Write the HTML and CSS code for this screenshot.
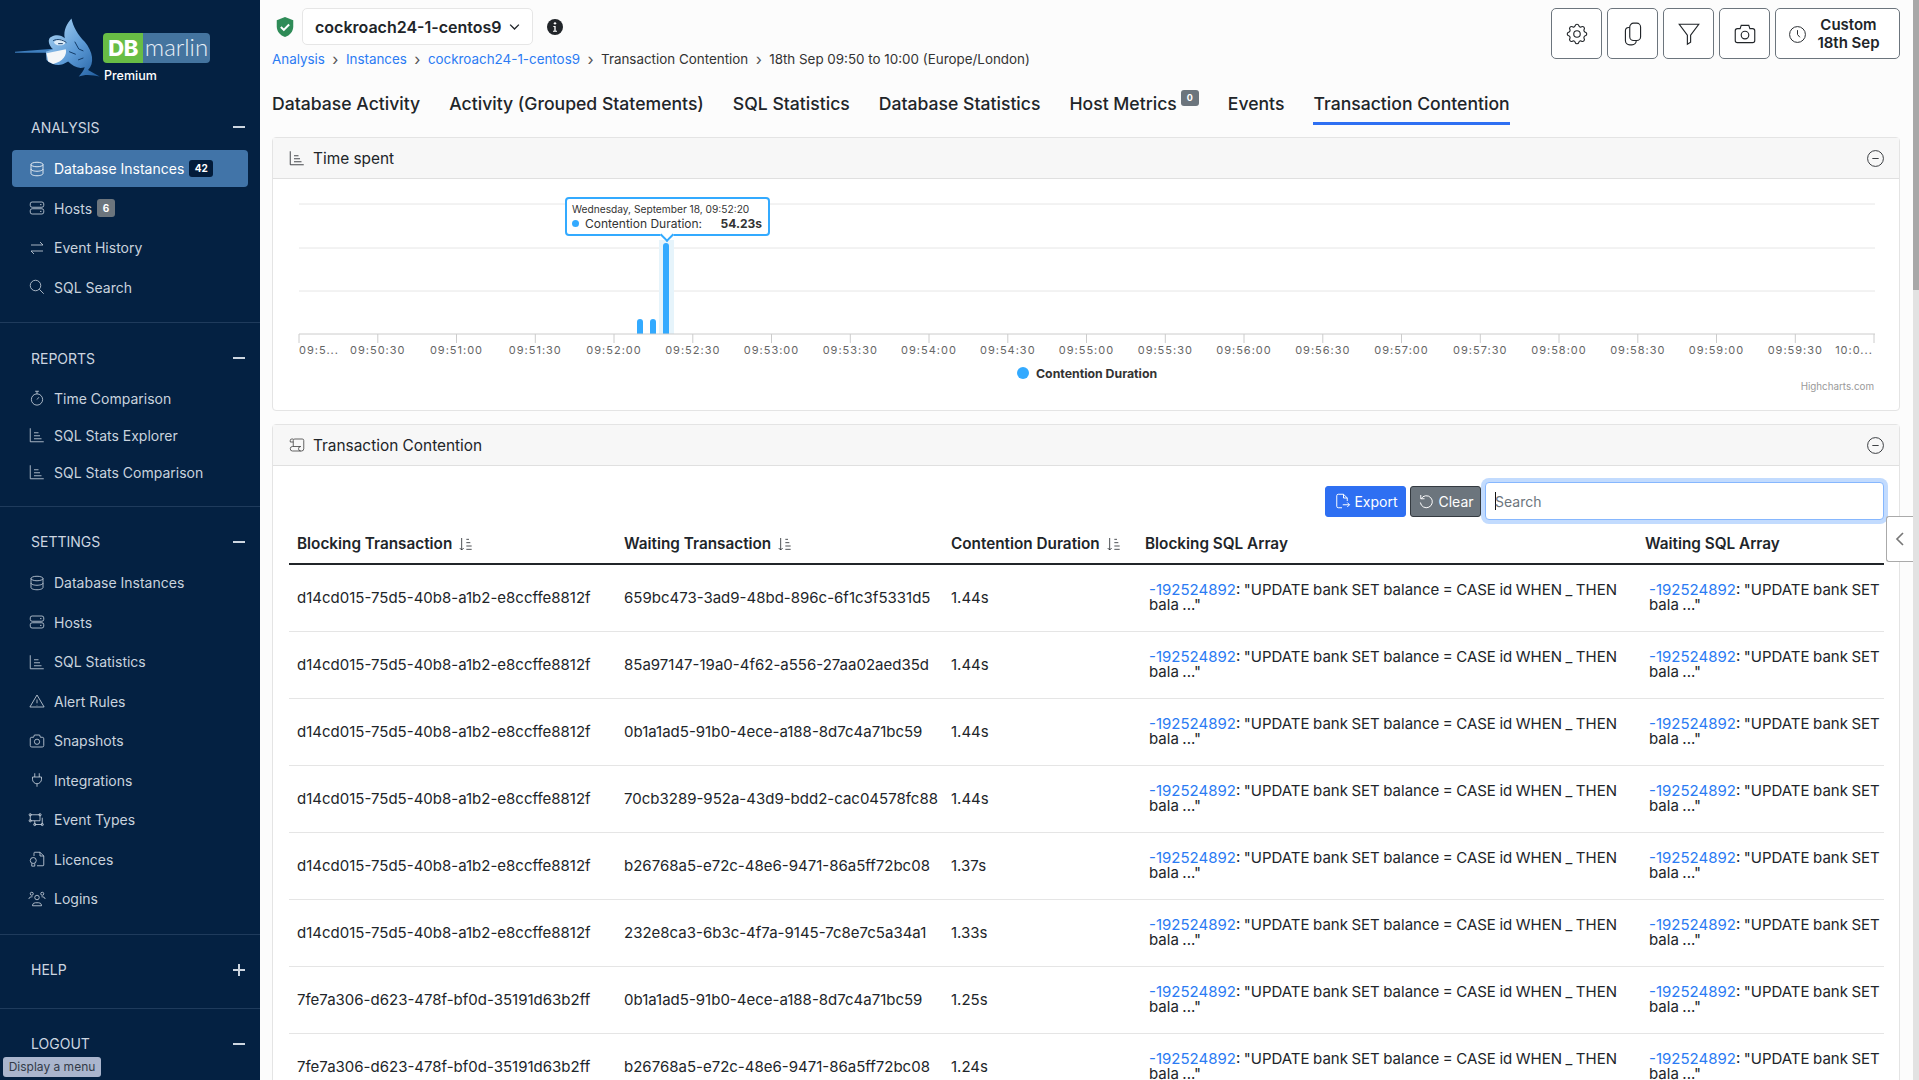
FILE: index.html
```html
<!DOCTYPE html>
<html lang="en">
<head>
  <meta charset="UTF-8">
  <title>Transaction Contention - DBmarlin</title>
  <link rel="stylesheet" href="styles.css">
</head>
<body>
  <svg class="sprite" xmlns="http://www.w3.org/2000/svg">
    <symbol id="i-database" viewBox="0 0 24 24"><ellipse cx="12" cy="6" rx="8" ry="3"/><path d="M4 6v12c0 1.7 3.6 3 8 3s8-1.3 8-3V6"/><path d="M4 12c0 1.7 3.6 3 8 3s8-1.3 8-3"/></symbol>
    <symbol id="i-server" viewBox="0 0 24 24"><rect x="3" y="4" width="18" height="7" rx="2.5"/><rect x="3" y="13" width="18" height="7" rx="2.5"/><path d="M16 7.5h2M16 16.5h2"/></symbol>
    <symbol id="i-arrows" viewBox="0 0 24 24"><path d="M4 8h16l-4-4M20 16H4l4 4"/></symbol>
    <symbol id="i-search" viewBox="0 0 24 24"><circle cx="10" cy="10" r="7"/><path d="M15 15l6 6"/></symbol>
    <symbol id="i-stopwatch" viewBox="0 0 24 24"><circle cx="12" cy="14" r="7.5"/><path d="M9.5 3h5M12 3v3.5M12 14l2.5-3"/></symbol>
    <symbol id="i-chart" viewBox="0 0 24 24"><path d="M3 3v18h18M8 9h6M8 13h8M8 17h10"/></symbol>
    <symbol id="i-alert" viewBox="0 0 24 24"><path d="M12 4L2.5 20h19zM12 10v5M12 17.5v.5"/></symbol>
    <symbol id="i-camera" viewBox="0 0 24 24"><path d="M5 7h2.5l1-3h7l1 3H19a2 2 0 0 1 2 2v9a2 2 0 0 1-2 2H5a2 2 0 0 1-2-2V9a2 2 0 0 1 2-2z"/><circle cx="12" cy="13" r="3.5"/></symbol>
    <symbol id="i-plug" viewBox="0 0 24 24"><path d="M9 3v5M15 3v5M6 8h12v3a6 6 0 0 1-12 0zM12 17v4"/></symbol>
    <symbol id="i-schema" viewBox="0 0 24 24"><path d="M3 5h13v8H3zM19 9v9H9v-5"/><circle cx="3" cy="5" r="1.5"/><circle cx="16" cy="5" r="1.5"/><circle cx="3" cy="13" r="1.5"/><circle cx="19" cy="18" r="1.5"/><circle cx="9" cy="18" r="1.5"/></symbol>
    <symbol id="i-licence" viewBox="0 0 24 24"><path d="M8 8V4a1 1 0 0 1 1-1h7l5 5v12a1 1 0 0 1-1 1H12M16 3v5h5"/><circle cx="7" cy="14" r="4"/><path d="M5 18v3.5h4V18"/></symbol>
    <symbol id="i-users" viewBox="0 0 24 24"><circle cx="12" cy="10" r="3"/><path d="M6 21v-1a4 4 0 0 1 4-3h4a4 4 0 0 1 4 3v1H6z"/><circle cx="5" cy="5" r="2"/><circle cx="19" cy="5" r="2"/><path d="M1 12a4 4 0 0 1 4-3h1M23 12a4 4 0 0 0-4-3h-1"/></symbol>
    <symbol id="i-sort" viewBox="0 0 24 24"><path d="M7 3v18l-3-3M7 21l3-3M14 5h4M14 10h6M14 15h8M14 20h8"/></symbol>
    <symbol id="i-minus-circle" viewBox="0 0 24 24"><circle cx="12" cy="12" r="10"/><path d="M8 12h8"/></symbol>
  </svg>

  <aside class="sidebar">
    <div class="logo">
      <svg class="marlin" viewBox="0 0 280 210" xmlns="http://www.w3.org/2000/svg">
        <defs>
          <linearGradient id="fish" x1="0" y1="0" x2="1" y2="1">
            <stop offset="0" stop-color="#b5dbf7"/>
            <stop offset="0.55" stop-color="#5c9ad6"/>
            <stop offset="1" stop-color="#1f5c9e"/>
          </linearGradient>
        </defs>
        <path d="M15 125L130 116L136 128L15 128Z" fill="#3f7fbf"/>
        <path d="M185 25C190 50 205 75 225 95C250 125 255 160 235 180L270 200C250 195 225 192 207 200C215 190 222 183 225 172C205 178 190 170 175 155L165 160C150 170 125 165 110 150L108 125L130 118C115 105 112 85 125 80C140 72 155 75 165 85C160 60 172 40 185 25Z" fill="url(#fish)"/>
        <path d="M110 130L168 118C172 135 160 155 130 162L115 155Z" fill="#f4f6f8"/>
        <ellipse cx="150" cy="97" rx="17" ry="9" fill="#dcebf8"/>
        <path d="M130 92C142 86 158 88 170 98M145 101h14M195 95l12 22M207 117l14 6M178 125l20 8M205 150l16-6" fill="none" stroke="#123a66" stroke-width="3"/>
      </svg>
      <div class="logo-text">
        <div class="logo-badge"><span class="logo-db">DB</span><span class="logo-name">marlin</span></div>
        <div class="logo-plan">Premium</div>
      </div>
    </div>

    <section class="nav-section">
      <div class="nav-head"><span>ANALYSIS</span><span class="nav-toggle"></span></div>
      <ul class="nav-list">
        <li class="nav-item active"><svg class="icon"><use href="#i-database"/></svg>Database Instances<span class="badge badge-dark">42</span></li>
        <li class="nav-item"><svg class="icon"><use href="#i-server"/></svg>Hosts<span class="badge badge-grey">6</span></li>
        <li class="nav-item"><svg class="icon"><use href="#i-arrows"/></svg>Event History</li>
        <li class="nav-item"><svg class="icon"><use href="#i-search"/></svg>SQL Search</li>
      </ul>
    </section>

    <section class="nav-section">
      <div class="nav-head"><span>REPORTS</span><span class="nav-toggle"></span></div>
      <ul class="nav-list nav-list-short">
        <li class="nav-item"><svg class="icon"><use href="#i-stopwatch"/></svg>Time Comparison</li>
        <li class="nav-item"><svg class="icon"><use href="#i-chart"/></svg>SQL Stats Explorer</li>
        <li class="nav-item"><svg class="icon"><use href="#i-chart"/></svg>SQL Stats Comparison</li>
      </ul>
    </section>

    <section class="nav-section">
      <div class="nav-head"><span>SETTINGS</span><span class="nav-toggle"></span></div>
      <ul class="nav-list nav-list-tight">
        <li class="nav-item"><svg class="icon"><use href="#i-database"/></svg>Database Instances</li>
        <li class="nav-item"><svg class="icon"><use href="#i-server"/></svg>Hosts</li>
        <li class="nav-item"><svg class="icon"><use href="#i-chart"/></svg>SQL Statistics</li>
        <li class="nav-item"><svg class="icon"><use href="#i-alert"/></svg>Alert Rules</li>
        <li class="nav-item"><svg class="icon"><use href="#i-camera"/></svg>Snapshots</li>
        <li class="nav-item"><svg class="icon"><use href="#i-plug"/></svg>Integrations</li>
        <li class="nav-item"><svg class="icon"><use href="#i-schema"/></svg>Event Types</li>
        <li class="nav-item"><svg class="icon"><use href="#i-licence"/></svg>Licences</li>
        <li class="nav-item"><svg class="icon"><use href="#i-users"/></svg>Logins</li>
      </ul>
    </section>

    <section class="nav-section nav-section-help">
      <div class="nav-head"><span>HELP</span><span class="nav-toggle plus"></span></div>
    </section>

    <section class="nav-section nav-section-last">
      <div class="nav-head"><span>LOGOUT</span><span class="nav-toggle"></span></div>
    </section>

    <div class="menu-tip">Display a menu</div>
  </aside>

  <main class="content">
    <header class="topbar">
      <div class="topbar-left">
        <div class="instance-row">
          <svg class="shield" viewBox="0 0 24 24"><path d="M12 1l9 3.5v7c0 5.5-3.8 9.8-9 11.5-5.2-1.7-9-6-9-11.5v-7z" fill="#2e8b57"/><path d="M7.5 12l3.2 3.2 5.8-6" fill="none" stroke="#fff" stroke-width="2.2"/></svg>
          <div class="instance-select">cockroach24-1-centos9
            <svg class="chevron" viewBox="0 0 24 24"><path d="M5 9l7 7 7-7"/></svg>
          </div>
          <svg class="info" viewBox="0 0 24 24"><circle cx="12" cy="12" r="12" fill="#212529"/><circle cx="12" cy="6.5" r="1.8" fill="#fff"/><path d="M9.5 10.5H13v7h2V19H9v-1.5h2V12H9.5z" fill="#fff"/></svg>
        </div>
        <nav class="breadcrumb">
          <a>Analysis</a><span class="sep">›</span><a>Instances</a><span class="sep">›</span><a>cockroach24-1-centos9</a><span class="sep">›</span><span>Transaction Contention</span><span class="sep">›</span><span>18th Sep 09:50 to 10:00 (Europe/London)</span>
        </nav>
      </div>
      <div class="actions">
        <button class="action"><svg class="icon-lg" viewBox="0 0 24 24"><path d="M10.325 4.317c.426-1.756 2.924-1.756 3.35 0a1.724 1.724 0 0 0 2.573 1.066c1.543-.94 3.31.826 2.37 2.37a1.724 1.724 0 0 0 1.065 2.572c1.756.426 1.756 2.924 0 3.35a1.724 1.724 0 0 0-1.066 2.573c.94 1.543-.826 3.31-2.37 2.37a1.724 1.724 0 0 0-2.572 1.065c-.426 1.756-2.924 1.756-3.35 0a1.724 1.724 0 0 0-2.573-1.066c-1.543.94-3.31-.826-2.37-2.37a1.724 1.724 0 0 0-1.065-2.572c-1.756-.426-1.756-2.924 0-3.35a1.724 1.724 0 0 0 1.066-2.573c-.94-1.543.826-3.31 2.37-2.37 1 .608 2.296.07 2.572-1.065z"/><circle cx="12" cy="12" r="3"/></svg></button>
        <button class="action"><svg class="icon-lg" viewBox="0 0 24 24"><rect x="9" y="2" width="10" height="16" rx="3.5"/><path d="M9 6H8a3 3 0 0 0-3 3v9a4 4 0 0 0 4 4h2a4 4 0 0 0 4-4"/></svg></button>
        <button class="action"><svg class="icon-lg" viewBox="0 0 24 24"><path d="M3 3h18l-7.5 10v6.5l-3 2V13z"/></svg></button>
        <button class="action"><svg class="icon-lg" viewBox="0 0 24 24"><use href="#i-camera"/></svg></button>
        <button class="action action-time"><svg class="icon-md" viewBox="0 0 24 24"><circle cx="12" cy="12" r="10"/><path d="M12 6.5V12l3 3.5"/></svg><span>Custom<br>18th Sep</span></button>
      </div>
    </header>

    <nav class="tabs">
      <a class="tab">Database Activity</a>
      <a class="tab">Activity (Grouped Statements)</a>
      <a class="tab">SQL Statistics</a>
      <a class="tab">Database Statistics</a>
      <a class="tab tab-metrics">Host Metrics<span class="tab-badge">0</span></a>
      <a class="tab">Events</a>
      <a class="tab tab-active">Transaction Contention</a>
    </nav>

    <section class="panel">
      <div class="panel-head">
        <svg class="panel-icon"><use href="#i-chart"/></svg>
        <span class="panel-title">Time spent</span>
        <svg class="panel-toggle"><use href="#i-minus-circle"/></svg>
      </div>
      <div class="chart">
        <svg class="chart-svg" viewBox="0 0 1626 231" xmlns="http://www.w3.org/2000/svg">
          <g class="grid"><path d="M26 25H1602M26 69H1602M26 112H1602"/></g>
          <rect x="386" y="61" width="15" height="94" fill="#e6f4fb"/>
          <g fill="#33aaff">
            <path d="M364 155V143a3 3 0 0 1 6 0V155z"/>
            <path d="M377 155V143a3 3 0 0 1 6 0V155z"/>
            <path d="M390 155V67a3 3 0 0 1 6 0V155z"/>
          </g>
          <g class="axis">
            <path d="M26 155H1602"/>
            <path d="M26 155v9M104.8 155v9M183.5 155v9M262.3 155v9M341 155v9M419.8 155v9M498.5 155v9M577.3 155v9M656 155v9M734.8 155v9M813.5 155v9M892.3 155v9M971 155v9M1049.8 155v9M1128.5 155v9M1207.3 155v9M1286 155v9M1364.8 155v9M1443.5 155v9M1522.3 155v9M1601 155v9"/>
          </g>
          <g class="ticks">
            <text x="46" y="175">09:5...</text>
            <text x="104.8" y="175">09:50:30</text>
            <text x="183.5" y="175">09:51:00</text>
            <text x="262.3" y="175">09:51:30</text>
            <text x="341" y="175">09:52:00</text>
            <text x="419.8" y="175">09:52:30</text>
            <text x="498.5" y="175">09:53:00</text>
            <text x="577.3" y="175">09:53:30</text>
            <text x="656" y="175">09:54:00</text>
            <text x="734.8" y="175">09:54:30</text>
            <text x="813.5" y="175">09:55:00</text>
            <text x="892.3" y="175">09:55:30</text>
            <text x="971" y="175">09:56:00</text>
            <text x="1049.8" y="175">09:56:30</text>
            <text x="1128.5" y="175">09:57:00</text>
            <text x="1207.3" y="175">09:57:30</text>
            <text x="1286" y="175">09:58:00</text>
            <text x="1364.8" y="175">09:58:30</text>
            <text x="1443.5" y="175">09:59:00</text>
            <text x="1522.3" y="175">09:59:30</text>
            <text x="1581" y="175">10:0...</text>
          </g>
          <circle cx="750" cy="194" r="6" fill="#33aaff"/>
          <text class="legend" x="763" y="198.5">Contention Duration</text>
          <text class="credits" x="1601" y="211">Highcharts.com</text>
        </svg>
        <div class="chart-tip">
          <div class="tip-date">Wednesday, September 18, 09:52:20</div>
          <div class="tip-row"><span class="tip-dot"></span><span class="tip-name">Contention Duration:</span><b class="tip-value">54.23s</b></div>
        </div>
      </div>
    </section>

    <section class="panel panel-table">
      <div class="panel-head">
        <svg class="panel-icon" viewBox="0 0 24 24"><path d="M17 20H6a3 3 0 0 1 0-6h11a3 3 0 0 0 0 6h1a3 3 0 0 0 3-3V6a2 2 0 0 0-2-2H9a2 2 0 0 0-2 2v8M7 4H5a2 2 0 0 0-2 2v2h4"/></svg>
        <span class="panel-title">Transaction Contention</span>
        <svg class="panel-toggle"><use href="#i-minus-circle"/></svg>
      </div>
      <div class="table-wrap">
        <div class="toolbar">
          <button class="btn btn-blue"><svg class="btn-icon" viewBox="0 0 24 24"><path d="M12 21H7a2 2 0 0 1-2-2V5a2 2 0 0 1 2-2h7l5 5v4M14 3v5h5M13 17h9M19 14l3 3-3 3"/></svg>Export</button>
          <button class="btn btn-grey"><svg class="btn-icon" viewBox="0 0 24 24"><path d="M5 4v5h5M5.5 9a8 8 0 1 1-1 5"/></svg>Clear</button>
          <div class="search"><span class="caret"></span>Search</div>
        </div>
        <table class="grid-table">
          <colgroup>
            <col class="col-block"><col class="col-wait"><col class="col-dur"><col class="col-bsql"><col class="col-wsql">
          </colgroup>
          <thead>
            <tr>
              <th>Blocking Transaction <svg class="sort"><use href="#i-sort"/></svg></th>
              <th>Waiting Transaction <svg class="sort"><use href="#i-sort"/></svg></th>
              <th>Contention Duration <svg class="sort"><use href="#i-sort"/></svg></th>
              <th>Blocking SQL Array</th>
              <th>Waiting SQL Array</th>
            </tr>
          </thead>
          <tbody>
            <tr>
              <td>d14cd015-75d5-40b8-a1b2-e8ccffe8812f</td><td>659bc473-3ad9-48bd-896c-6f1c3f5331d5</td><td>1.44s</td>
              <td class="sql"><a>-192524892</a>: "UPDATE bank SET balance = CASE id WHEN _ THEN bala ..."</td>
              <td class="sql"><a>-192524892</a>: "UPDATE bank SET bala ..."</td>
            </tr>
            <tr>
              <td>d14cd015-75d5-40b8-a1b2-e8ccffe8812f</td><td>85a97147-19a0-4f62-a556-27aa02aed35d</td><td>1.44s</td>
              <td class="sql"><a>-192524892</a>: "UPDATE bank SET balance = CASE id WHEN _ THEN bala ..."</td>
              <td class="sql"><a>-192524892</a>: "UPDATE bank SET bala ..."</td>
            </tr>
            <tr>
              <td>d14cd015-75d5-40b8-a1b2-e8ccffe8812f</td><td>0b1a1ad5-91b0-4ece-a188-8d7c4a71bc59</td><td>1.44s</td>
              <td class="sql"><a>-192524892</a>: "UPDATE bank SET balance = CASE id WHEN _ THEN bala ..."</td>
              <td class="sql"><a>-192524892</a>: "UPDATE bank SET bala ..."</td>
            </tr>
            <tr>
              <td>d14cd015-75d5-40b8-a1b2-e8ccffe8812f</td><td>70cb3289-952a-43d9-bdd2-cac04578fc88</td><td>1.44s</td>
              <td class="sql"><a>-192524892</a>: "UPDATE bank SET balance = CASE id WHEN _ THEN bala ..."</td>
              <td class="sql"><a>-192524892</a>: "UPDATE bank SET bala ..."</td>
            </tr>
            <tr>
              <td>d14cd015-75d5-40b8-a1b2-e8ccffe8812f</td><td>b26768a5-e72c-48e6-9471-86a5ff72bc08</td><td>1.37s</td>
              <td class="sql"><a>-192524892</a>: "UPDATE bank SET balance = CASE id WHEN _ THEN bala ..."</td>
              <td class="sql"><a>-192524892</a>: "UPDATE bank SET bala ..."</td>
            </tr>
            <tr>
              <td>d14cd015-75d5-40b8-a1b2-e8ccffe8812f</td><td>232e8ca3-6b3c-4f7a-9145-7c8e7c5a34a1</td><td>1.33s</td>
              <td class="sql"><a>-192524892</a>: "UPDATE bank SET balance = CASE id WHEN _ THEN bala ..."</td>
              <td class="sql"><a>-192524892</a>: "UPDATE bank SET bala ..."</td>
            </tr>
            <tr>
              <td>7fe7a306-d623-478f-bf0d-35191d63b2ff</td><td>0b1a1ad5-91b0-4ece-a188-8d7c4a71bc59</td><td>1.25s</td>
              <td class="sql"><a>-192524892</a>: "UPDATE bank SET balance = CASE id WHEN _ THEN bala ..."</td>
              <td class="sql"><a>-192524892</a>: "UPDATE bank SET bala ..."</td>
            </tr>
            <tr>
              <td>7fe7a306-d623-478f-bf0d-35191d63b2ff</td><td>b26768a5-e72c-48e6-9471-86a5ff72bc08</td><td>1.24s</td>
              <td class="sql"><a>-192524892</a>: "UPDATE bank SET balance = CASE id WHEN _ THEN bala ..."</td>
              <td class="sql"><a>-192524892</a>: "UPDATE bank SET bala ..."</td>
            </tr>
          </tbody>
        </table>
      </div>
      <div class="side-tab"><svg viewBox="0 0 24 24"><path d="M16 4l-8 8 8 8"/></svg></div>
    </section>
  </main>

  <div class="scrollbar"><div class="scroll-thumb"></div></div>
</body>
</html>
```

FILE: styles.css
```css
* {
  box-sizing: border-box;
}

html, body {
  height: 100%;
}

body {
  margin: 0;
  display: flex;
  height: 100vh;
  overflow: hidden;
  font-family: 'Inter', sans-serif;
  color: #212529;
  background-color: #fcfcfc;
}

.sprite {
  display: none;
}

.sprite symbol {
  fill: none;
  stroke: currentColor;
}

/* sidebar */
.sidebar {
  position: relative;
  flex: 0 0 260px;
  height: 100%;
  overflow: hidden;
  background-color: #042142;
  color: #c9d3de;
  font-size: 14px;
}

.logo {
  display: flex;
  height: 92px;
  padding: 17px 0 0 15px;
}

.marlin {
  flex: none;
  width: 93px;
  height: 70px;
  margin: -7px 0 0 -5px;
}

.logo-badge {
  display: flex;
  width: 107px;
  height: 30px;
  margin-top: 16px;
  overflow: hidden;
  border-radius: 4px;
}

.logo-db {
  width: 40px;
  background-color: #68bd45;
  color: #fff;
  font-size: 22px;
  font-weight: 800;
  line-height: 30px;
  text-align: center;
  letter-spacing: -0.5px;
}

.logo-name {
  flex: 1;
  background-color: #44749f;
  color: #e8f0f7;
  font-family: 'Lato', sans-serif;
  font-size: 24px;
  font-weight: 300;
  line-height: 27px;
  text-align: center;
}

.logo-plan {
  margin-top: 5px;
  margin-left: 1px;
  color: #fff;
  font-size: 12.5px;
  font-weight: 500;
}

.nav-section {
  padding: 15px 0;
  border-bottom: 1px solid #1f3b5c;
}

.nav-section-help {
  padding-bottom: 18px;
}

.nav-section-last {
  border-bottom: none;
}

.nav-head {
  display: flex;
  justify-content: space-between;
  align-items: center;
  height: 40px;
  padding: 0 15px 0 31px;
  font-size: 14px;
  color: #cdd6e0;
}

.nav-toggle {
  position: relative;
  width: 12px;
  height: 2px;
  background-color: #cdd6e0;
}

.nav-toggle.plus::after {
  content: "";
  position: absolute;
  left: 5px;
  top: -5px;
  width: 2px;
  height: 12px;
  background-color: #cdd6e0;
}

.nav-list {
  margin: 2px 0 0;
  padding: 0;
  list-style: none;
}

.nav-list-short {
  margin-top: 1.5px;
}

.nav-list-tight {
  margin-top: 1.5px;
}

.nav-item {
  position: relative;
  display: flex;
  align-items: center;
  height: 39.5px;
  padding-left: 28px;
  z-index: 0;
}

.nav-list-short .nav-item {
  height: 37px;
}

.nav-item.active {
  color: #fff;
}

.nav-item.active::before {
  content: "";
  position: absolute;
  left: 12px;
  right: 12px;
  top: 1px;
  height: 37px;
  border-radius: 4px;
  background-color: #4174a8;
  z-index: -1;
}

.icon {
  flex: none;
  width: 18px;
  height: 18px;
  margin-right: 8px;
  fill: none;
  stroke: #b9c5d2;
  stroke-width: 1.1;
}

.badge {
  margin-left: 5px;
  border-radius: 3px;
  color: #fff;
  font-size: 10px;
  font-weight: 700;
  line-height: 17px;
  text-align: center;
}

.badge-dark {
  width: 24px;
  background-color: #021b3a;
}

.badge-grey {
  width: 18px;
  line-height: 18px;
  background-color: #6c757d;
}

.menu-tip {
  position: absolute;
  left: 3px;
  top: 1057px;
  width: 98px;
  height: 20px;
  border-radius: 3px;
  background-color: #aab5cd;
  color: #333b48;
  font-size: 12px;
  line-height: 20px;
  text-align: center;
}

/* main column */
.content {
  flex: 1;
  min-width: 0;
  height: 100%;
  overflow: hidden;
  padding: 8px 13px 0 12px;
}

.topbar {
  display: flex;
  justify-content: space-between;
  height: 60px;
}

.instance-row {
  display: flex;
  align-items: center;
  height: 37px;
}

.shield {
  width: 22px;
  height: 22px;
  margin: 0 6px 0 2px;
}

.instance-select {
  display: flex;
  align-items: center;
  justify-content: space-between;
  width: 231px;
  height: 37px;
  padding: 0 10px 0 12px;
  border: 1px solid #e6e6e6;
  border-radius: 5px;
  background-color: #fff;
  font-size: 16px;
  font-weight: 600;
}

.chevron {
  width: 15px;
  height: 15px;
  fill: none;
  stroke: #212529;
  stroke-width: 2.2;
}

.info {
  width: 16px;
  height: 16px;
  margin-left: 14px;
}

.breadcrumb {
  display: flex;
  align-items: center;
  margin-top: 5px;
  font-size: 13.4px;
  line-height: 18px;
  color: #333;
}

.breadcrumb a {
  color: #2b7bf3;
}

.sep {
  width: 21px;
  text-align: center;
  color: #555;
  font-size: 16px;
  line-height: 16px;
}

.actions {
  display: flex;
  gap: 5px;
  height: 51px;
}

.action {
  display: flex;
  align-items: center;
  justify-content: center;
  width: 51px;
  height: 51px;
  padding: 0;
  border: 1px solid #6c757d;
  border-radius: 5px;
  background-color: #fff;
  color: #212529;
  font-family: inherit;
}

.action-time {
  width: 125px;
  gap: 10px;
  padding: 1px 7px 0 0;
  font-size: 15px;
  font-weight: 600;
  line-height: 18px;
  text-align: center;
}

.icon-lg {
  width: 26px;
  height: 26px;
  fill: none;
  stroke: #212529;
  stroke-width: 1.05;
}

.icon-md {
  width: 19px;
  height: 19px;
  fill: none;
  stroke: #212529;
  stroke-width: 1.2;
}

.tabs {
  display: flex;
  gap: 29px;
  margin-top: 25px;
}

.tab {
  display: block;
  height: 32px;
  padding-bottom: 7px;
  border-bottom: 3px solid transparent;
  color: #212529;
  font-size: 17.6px;
  font-weight: 500;
  line-height: 22px;
  white-space: nowrap;
}

.tab-metrics {
  display: flex;
  align-items: flex-start;
}

.tab-active {
  border-bottom-color: #2e6ff2;
}

.tab-badge {
  width: 18px;
  height: 16px;
  margin: -3px 0 0 4px;
  border-radius: 3px;
  background-color: #6c757d;
  color: #fff;
  font-size: 9px;
  font-weight: 700;
  line-height: 16px;
  text-align: center;
}

/* panels */
.panel {
  margin-top: 12px;
  border: 1px solid #e4e4e4;
  border-radius: 4px;
  background-color: #fff;
}

.panel-table {
  position: relative;
  margin-top: 13px;
}

.panel-head {
  display: flex;
  align-items: center;
  height: 41px;
  padding: 0 16px 0 15px;
  border-bottom: 1px solid #e0e0e0;
  background-color: #f7f7f7;
}

.panel-icon {
  width: 18px;
  height: 18px;
  margin-right: 7px;
  fill: none;
  stroke: #444;
  stroke-width: 1.1;
}

.panel-title {
  flex: 1;
  font-size: 15.4px;
}

.panel-toggle {
  width: 19px;
  height: 19px;
  margin-right: -2px;
  fill: none;
  stroke: #444;
  stroke-width: 1.1;
}

.chart {
  position: relative;
  height: 231px;
}

.chart-svg {
  display: block;
  width: 1626px;
  height: 231px;
}

.grid path {
  stroke: #e6e6e6;
  fill: none;
}

.axis path {
  stroke: #ccc;
  fill: none;
}

.ticks text {
  fill: #666;
  font-size: 11px;
  letter-spacing: 1px;
  text-anchor: middle;
}

.legend {
  fill: #333;
  font-size: 12.3px;
  font-weight: 700;
}

.credits {
  fill: #999;
  font-size: 9.8px;
  text-anchor: end;
}

.chart-tip {
  position: absolute;
  left: 292px;
  top: 18px;
  width: 205px;
  height: 39px;
  padding: 4px 5px;
  border: 2px solid #33aaff;
  border-radius: 4px;
  background-color: #fff;
  color: #333;
}

.chart-tip::after {
  content: "";
  position: absolute;
  left: 95px;
  bottom: -6px;
  width: 8px;
  height: 8px;
  border-right: 2px solid #33aaff;
  border-bottom: 2px solid #33aaff;
  background-color: #fff;
  transform: rotate(45deg);
}

.tip-date {
  font-size: 10.2px;
  line-height: 13px;
}

.tip-row {
  display: flex;
  align-items: center;
  font-size: 12px;
  line-height: 15px;
}

.tip-dot {
  width: 7px;
  height: 7px;
  margin-right: 6px;
  border-radius: 50%;
  background-color: #33aaff;
}

.tip-value {
  margin-left: auto;
  margin-right: 1px;
}

/* table */
.table-wrap {
  padding: 16px 15px 0 16px;
}

.toolbar {
  display: flex;
  justify-content: flex-end;
  align-items: center;
  height: 38px;
  gap: 4px;
}

.btn {
  display: flex;
  align-items: center;
  justify-content: center;
  height: 31px;
  padding: 0;
  border-radius: 3px;
  color: #fff;
  font-family: inherit;
  font-size: 14px;
}

.btn-blue {
  width: 81px;
  border: 1px solid #2e6ff2;
  background-color: #2e6ff2;
}

.btn-grey {
  width: 71px;
  border: 1px solid #343a40;
  background-color: #6c757d;
}

.btn-icon {
  width: 18px;
  height: 18px;
  margin-right: 3px;
  fill: none;
  stroke: #fff;
  stroke-width: 1.3;
}

.search {
  display: flex;
  align-items: center;
  width: 399px;
  height: 38px;
  padding-left: 9px;
  border: 1px solid #86b7fe;
  border-radius: 4px;
  box-shadow: 0 0 0 4px #c2dbfe;
  background-color: #fff;
  color: #6c757d;
  font-size: 14px;
}

.caret {
  width: 1px;
  height: 18px;
  margin-right: -1px;
  background-color: #111;
}

.grid-table {
  width: 1595px;
  margin-top: 5px;
  border-collapse: collapse;
  table-layout: fixed;
  font-size: 15px;
}

.col-block, .col-wait {
  width: 327px;
}

.col-dur {
  width: 194px;
}

.col-bsql {
  width: 500px;
}

.col-wsql {
  width: 247px;
}

.grid-table th {
  height: 39px;
  padding: 0 0 2px 8px;
  border-bottom: 2px solid #212529;
  font-size: 15.3px;
  font-weight: 600;
  text-align: left;
  white-space: nowrap;
}

.grid-table td {
  height: 67px;
  padding: 0 4px 0 8px;
  border-bottom: 1px solid #e5e5e5;
  vertical-align: middle;
  white-space: nowrap;
}

.grid-table td.sql {
  padding: 0 0 2px 12px;
  line-height: 15px;
  word-spacing: -0.7px;
  white-space: normal;
}

.sql a {
  color: #2b7bf3;
}

.sort {
  width: 16px;
  height: 16px;
  margin-left: 1px;
  vertical-align: -3px;
  fill: none;
  stroke: #bbb;
  stroke-width: 1.2;
}

.side-tab {
  position: absolute;
  right: -14px;
  top: 91px;
  display: flex;
  align-items: center;
  justify-content: center;
  width: 27px;
  height: 46px;
  border: 1px solid #aaa;
  border-right: none;
  border-radius: 3px 0 0 3px;
  background-color: #fff;
}

.side-tab svg {
  width: 18px;
  height: 22px;
  fill: none;
  stroke: #777;
  stroke-width: 2.2;
}

.scrollbar {
  flex: 0 0 6px;
  height: 100%;
  background-color: #e2e2e2;
}

.scroll-thumb {
  height: 290px;
  background-color: #a8a8a8;
}
```
